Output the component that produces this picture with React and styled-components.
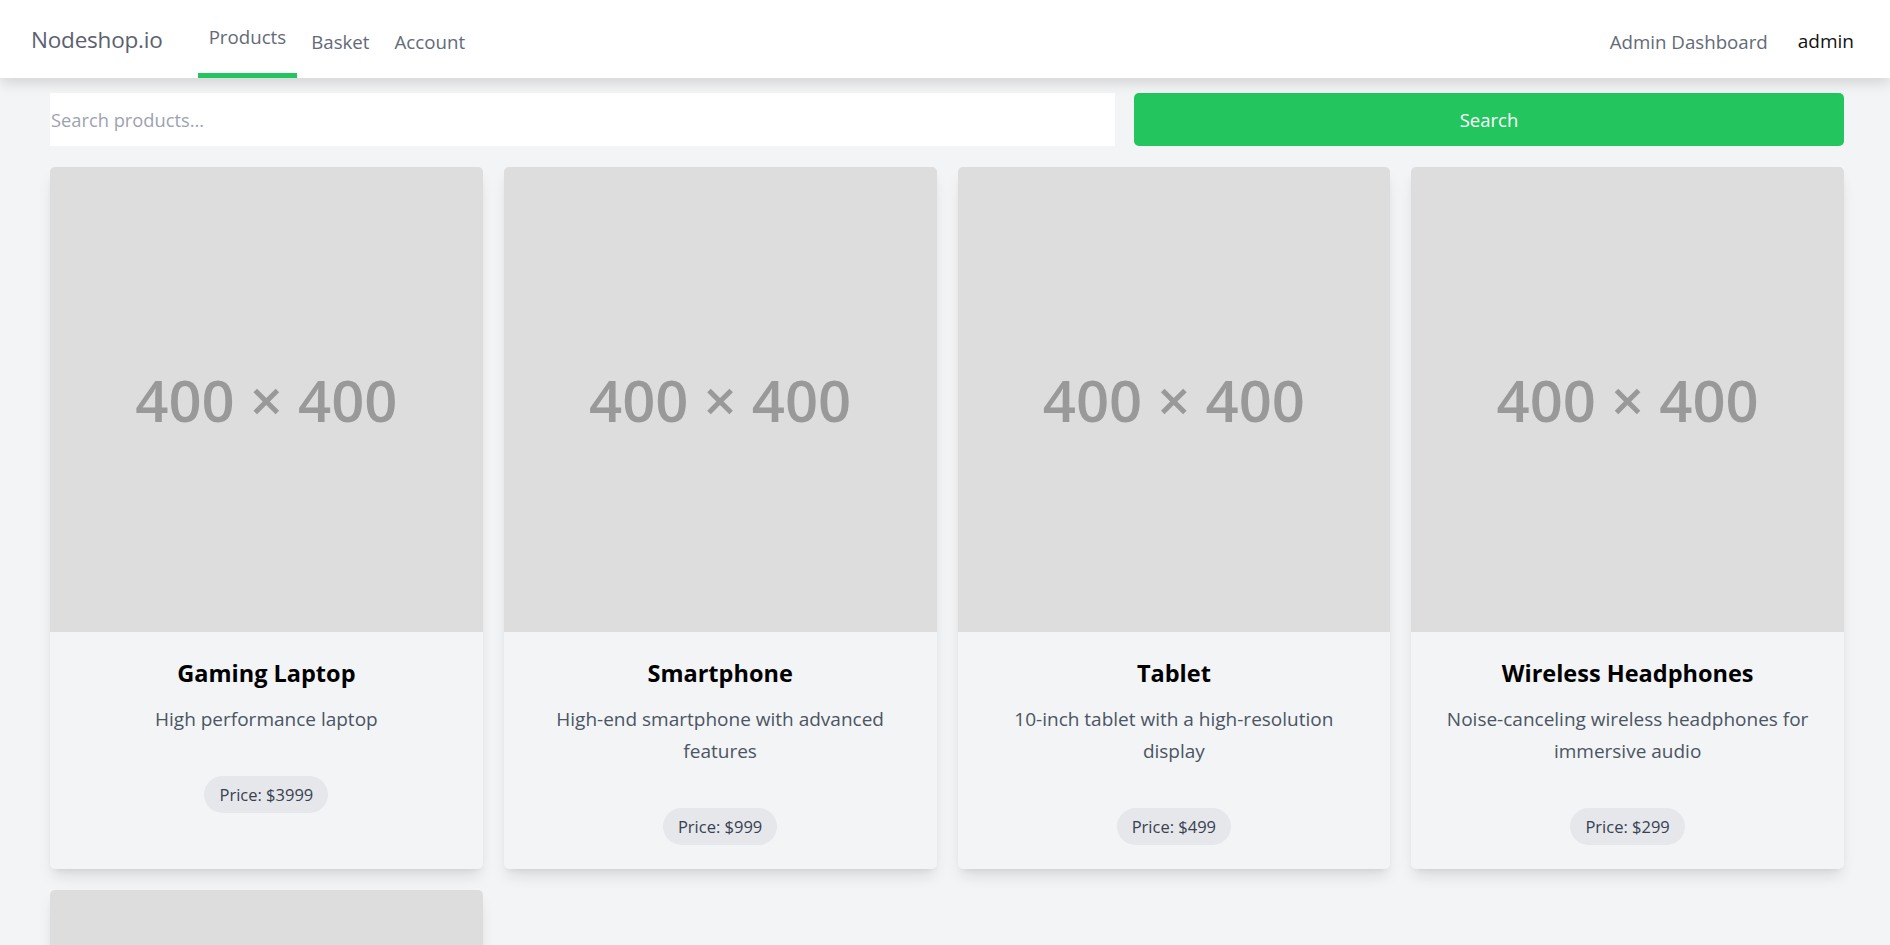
import styled, { createGlobalStyle } from "styled-components";

const products = [
  { id: 1, name: "Gaming Laptop", description: "High performance laptop", price: 3999 },
  { id: 2, name: "Smartphone", description: "High-end smartphone with advanced features", price: 999 },
  { id: 3, name: "Tablet", description: "10-inch tablet with a high-resolution display", price: 499 },
  { id: 4, name: "Wireless Headphones", description: "Noise-canceling wireless headphones for immersive audio", price: 299 },
  { id: 5, name: "Smartwatch", description: "Fitness tracking smartwatch", price: 199 },
];

export default function App() {
  return (
    <>
      <GlobalStyle />
      <Header>
        <NavLeft>
          <Logo>Nodeshop.io</Logo>
          <NavLinks>
            <NavLink $active>Products</NavLink>
            <NavLink>Basket</NavLink>
            <NavLink>Account</NavLink>
          </NavLinks>
        </NavLeft>
        <NavRight>
          <NavLink>Admin Dashboard</NavLink>
          <UserName>admin</UserName>
        </NavRight>
      </Header>
      <Main>
        <SearchRow>
          <SearchInput placeholder="Search products..." />
          <SearchButton>Search</SearchButton>
        </SearchRow>
        <Grid>
          {products.map((product) => (
            <Card key={product.id}>
              <Placeholder>400 × 400</Placeholder>
              <CardBody>
                <Title>{product.name}</Title>
                <Description>{product.description}</Description>
                <Price>Price: ${product.price}</Price>
              </CardBody>
            </Card>
          ))}
        </Grid>
      </Main>
    </>
  );
}

const GlobalStyle = createGlobalStyle`
  body {
    margin: 0;
    background: #f3f4f6;
    font-family: "Open Sans", "Noto Sans", sans-serif;
    color: #111827;
  }
  * {
    box-sizing: border-box;
  }
`;

// 헤더
const Header = styled.header`
  height: 78px;
  background: #fff;
  box-shadow: 0 4px 14px rgba(0, 0, 0, 0.15);
  display: flex;
  align-items: stretch;
  justify-content: space-between;
  padding: 0 36px 0 31px;
  position: relative;
  z-index: 1;
`;

const NavLeft = styled.div`
  display: flex;
  align-items: stretch;
`;

const Logo = styled.div`
  display: flex;
  align-items: center;
  font-size: 22.5px;
  color: #5b6170;
  margin-right: 35px;
  letter-spacing: -0.2px;
`;

const NavLinks = styled.nav`
  display: flex;
  gap: 3px;
`;

// 메뉴 링크 (활성 탭은 초록 밑줄)
const NavLink = styled.a`
  display: flex;
  align-items: center;
  padding: ${(p) => (p.$active ? "0 11px" : "4px 11px 0")};
  font-size: 18.7px;
  color: #636a78;
  border-bottom: ${(p) => (p.$active ? "5px solid #22c55e" : "none")};
  cursor: pointer;
`;

const NavRight = styled.div`
  display: flex;
  align-items: stretch;
  gap: 19px;
`;

const UserName = styled.span`
  display: flex;
  align-items: center;
  font-size: 19px;
  color: #111;
  padding-top: 4px;
`;

// 메인
const Main = styled.main`
  padding: 15px 46px 40px 50px;
`;

const SearchRow = styled.div`
  display: grid;
  grid-template-columns: 3fr 2fr;
  gap: 19px;
  margin-bottom: 21px;
`;

const SearchInput = styled.input`
  height: 53px;
  border: none;
  outline: none;
  background: #fff;
  padding: 0 1px;
  font-family: inherit;
  font-size: 18.3px;
  color: #111827;
  &::placeholder {
    color: #9ca3af;
  }
`;

const SearchButton = styled.button`
  height: 53px;
  border: none;
  border-radius: 5px;
  background: #22c55e;
  color: #fff;
  font-family: inherit;
  font-size: 18.5px;
  cursor: pointer;
`;

const Grid = styled.div`
  display: grid;
  grid-template-columns: repeat(4, 1fr);
  gap: 21px;
`;

const Card = styled.div`
  background: #f3f4f6;
  border-radius: 5px;
  overflow: hidden;
  box-shadow: 0 10px 15px -3px rgba(0, 0, 0, 0.1), 0 4px 6px -4px rgba(0, 0, 0, 0.1);
`;

const Placeholder = styled.div`
  height: 465px;
  background: #dddddd;
  display: flex;
  align-items: center;
  justify-content: center;
  font-family: "Open Sans", sans-serif;
  font-size: 58px;
  font-weight: 600;
  color: #999;
`;

const CardBody = styled.div`
  padding: 24px;
  text-align: center;
`;

const Title = styled.h2`
  margin: 0 0 13px;
  font-size: 23.5px;
  line-height: 34px;
  font-weight: 700;
  color: #000;
`;

const Description = styled.p`
  margin: 0 0 41px;
  font-size: 19px;
  line-height: 32px;
  color: #4b5563;
`;

const Price = styled.span`
  display: inline-block;
  padding: 0 15px;
  height: 37px;
  line-height: 37px;
  border-radius: 999px;
  background: #e5e7eb;
  font-size: 16.5px;
  font-weight: 500;
  color: #374151;
`;
